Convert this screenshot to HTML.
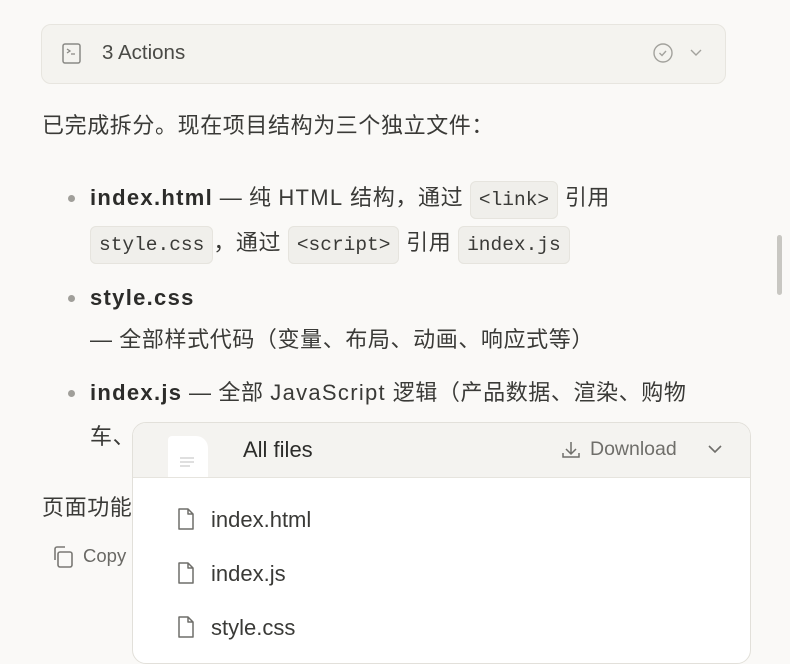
<!DOCTYPE html>
<html><head><meta charset="utf-8"><style>
body{margin:0;width:790px;height:664px;overflow:hidden;background:#faf9f7;font-family:"Liberation Sans","Noto Sans CJK SC",sans-serif;color:#3a3a37;position:relative}
.a{position:absolute;white-space:nowrap}
.t{font-size:22px;line-height:30px;letter-spacing:.6px}
.l{letter-spacing:1.3px}
code{font-family:"Liberation Mono",monospace;font-size:19.5px;background:#f0efeb;border:1px solid #e6e4de;border-radius:6px;padding:7px 8px;color:#3a3a37;letter-spacing:0}
.dot{position:absolute;width:7px;height:7px;border-radius:50%;background:#a09f9a}
b{font-weight:bold;color:#2c2c2a}
</style></head><body>
<div class="a" style="left:41px;top:24px;width:683px;height:58px;border:1px solid #e7e5df;border-radius:10px;background:#f4f3ef"></div>
<svg class="a" style="left:62px;top:43px" width="20" height="22" viewBox="0 0 20 22"><rect x="1" y="1" width="17" height="19" rx="2" fill="none" stroke="#8a8985" stroke-width="1.5"/><path d="M5 6l3 2-3 2M9 11h4" stroke="#8a8985" stroke-width="1.3" fill="none"/></svg>
<div class="a" style="left:102px;top:41px;font-size:20.5px;line-height:24px;color:#4a4a46">3 Actions</div>
<svg class="a" style="left:653px;top:43px" width="50" height="20"><circle cx="10" cy="10" r="9" fill="none" stroke="#a3a29d" stroke-width="1.4"/><path d="M6.5 10l2.5 2.5 4-4.5" fill="none" stroke="#a3a29d" stroke-width="1.4"/><path d="M38 7l5 5 5-5" fill="none" stroke="#a3a29d" stroke-width="1.4"/></svg>
<div class="a t" style="left:42px;top:111px">已完成拆分。现在项目结构为三个独立文件：</div>
<div class="dot" style="left:68px;top:195px"></div>
<div class="a t" style="left:90px;top:183px"><b class="l">index.html</b> — 纯 <span class="l">HTML</span> 结构，通过 <code>&lt;link&gt;</code> 引用</div>
<div class="a t" style="left:90px;top:228px"><code>style.css</code>，通过 <code>&lt;script&gt;</code> 引用 <code>index.js</code></div>
<div class="dot" style="left:68px;top:295px"></div>
<div class="a t" style="left:90px;top:283px"><b class="l">style.css</b></div>
<div class="a t" style="left:90px;top:325px">— 全部样式代码（变量、布局、动画、响应式等）</div>
<div class="dot" style="left:68px;top:390px"></div>
<div class="a t" style="left:90px;top:378px"><b class="l">index.js</b> — 全部 <span class="l">JavaScript</span> 逻辑（产品数据、渲染、购物</div>
<div class="a t" style="left:90px;top:422px">车、</div>
<div class="a t" style="left:42px;top:493px">页面功能</div>
<svg class="a" style="left:50px;top:545px" width="24" height="24"><path d="M5 15V4a2 2 0 0 1 2-2h8" fill="none" stroke="#7a7975" stroke-width="1.6"/><rect x="8" y="7" width="14" height="15" rx="2" fill="none" stroke="#7a7975" stroke-width="1.6"/></svg>
<div class="a" style="left:83px;top:545px;font-size:18.5px;line-height:22px;color:#6a6965">Copy</div>
<div class="a" style="left:777px;top:235px;width:5px;height:60px;border-radius:3px;background:#c8c7c2"></div>
<div class="a" style="left:132px;top:422px;width:617px;height:240px;border:1px solid #e2e0da;border-radius:14px;background:#fff;overflow:hidden">
 <div style="height:54px;background:#f4f3f0;border-bottom:1px solid #e6e4de;position:relative">
  <div style="position:absolute;left:35px;top:13px;width:40px;height:41px;background:#fff;border-radius:4px 12px 0 0"></div>
  <svg style="position:absolute;left:45px;top:33px" width="20" height="14"><path d="M2 2h14M2 6h14M2 10h10" stroke="#ccc" stroke-width="1.2"/></svg>
  <div style="position:absolute;left:110px;top:14px;font-size:22px;color:#2c2c2a">All files</div>
  <svg style="position:absolute;left:428px;top:17px" width="20" height="20"><path d="M10 2v11M5 9l5 5 5-5M2 13v4h16v-4" fill="none" stroke="#6f6e6a" stroke-width="1.5"/></svg>
  <div style="position:absolute;left:457px;top:15px;font-size:19.5px;color:#6f6e6a">Download</div>
  <svg style="position:absolute;left:574px;top:20px" width="16" height="12"><path d="M2 3l6 6 6-6" fill="none" stroke="#6f6e6a" stroke-width="1.6"/></svg>
 </div>
 <div style="position:absolute;left:44px;top:84px;font-size:22px;line-height:24px;color:#3a3a37">
  <div style="height:54px"><svg width="20" height="24" style="vertical-align:-4px;margin-right:14px"><path d="M2 2h9l5 5v15H2z M11 2v5h5" fill="none" stroke="#6f6e6a" stroke-width="1.5" stroke-linejoin="round"/></svg>index.html</div>
  <div style="height:54px"><svg width="20" height="24" style="vertical-align:-4px;margin-right:14px"><path d="M2 2h9l5 5v15H2z M11 2v5h5" fill="none" stroke="#6f6e6a" stroke-width="1.5" stroke-linejoin="round"/></svg>index.js</div>
  <div style="height:54px"><svg width="20" height="24" style="vertical-align:-4px;margin-right:14px"><path d="M2 2h9l5 5v15H2z M11 2v5h5" fill="none" stroke="#6f6e6a" stroke-width="1.5" stroke-linejoin="round"/></svg>style.css</div>
 </div>
</div>
</body></html>
